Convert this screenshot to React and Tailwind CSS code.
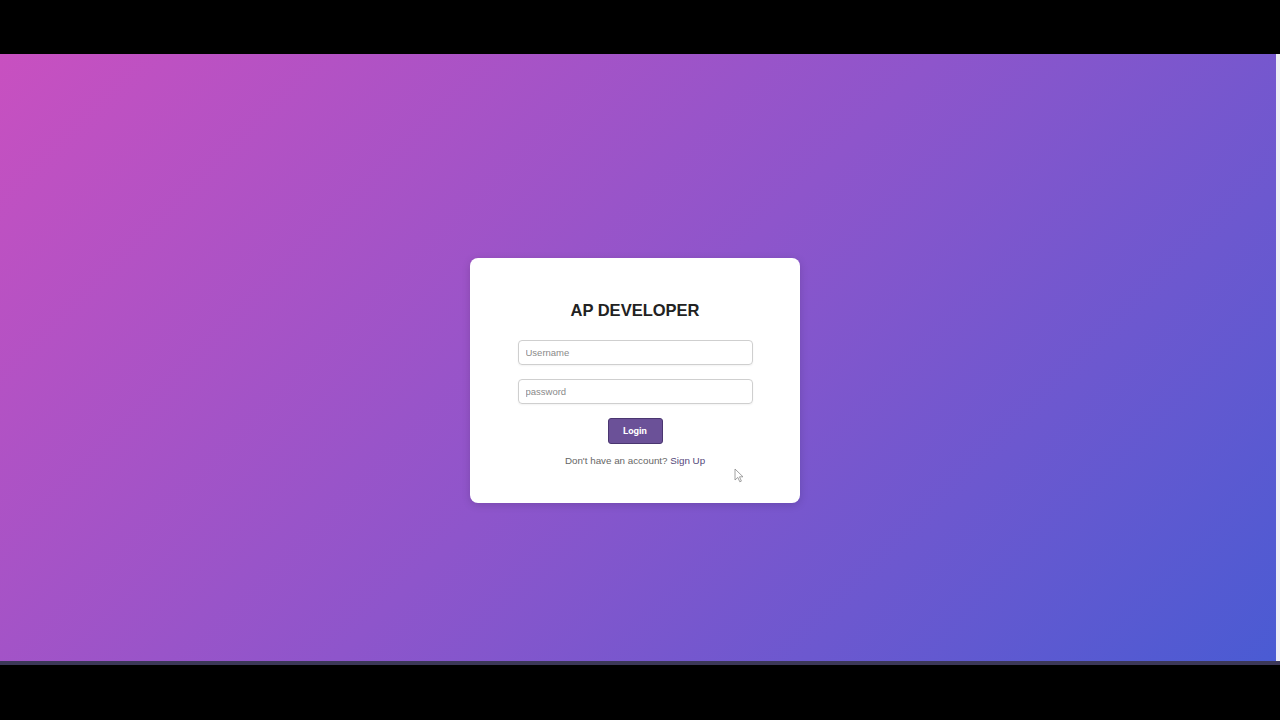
import React from "react";

function Cursor() {
  return (
    <svg width="10" height="15" viewBox="0 0 10 15" className="absolute left-[734px] top-[468px]">
      <path d="M1 1 L1 12 L3.8 9.4 L5.8 13.8 L7.4 13.1 L5.5 8.8 L9 8.8 Z" fill="#fff" stroke="#8a8a8a" strokeWidth="0.8" strokeLinejoin="round" />
    </svg>
  );
}

export default function App() {
  return (
    <div className="w-[1280px] h-[720px] bg-black flex flex-col relative font-['Liberation_Sans',Arial,sans-serif] overflow-hidden">
      <div className="h-[54px] shrink-0"></div>

      <div className="flex h-[607px] shrink-0">
        <div className="w-[1276px] h-full bg-[linear-gradient(135deg,#c850c0_0%,#8e55cb_50%,#4a5bd3_100%)] pl-[470px] pt-[204px]">
          <div className="w-[330px] h-[245px] bg-white rounded-[8px] shadow-[0_2px_8px_rgba(0,0,0,0.15)] flex flex-col items-center pt-[41px]">
            <h1 className="text-[16.5px] font-bold text-[#222] leading-[22px]">AP DEVELOPER</h1>

            <input
              type="text"
              placeholder="Username"
              className="mt-[19px] w-[235px] h-[25px] border border-[#cfcfcf] rounded-[4px] px-[7px] text-[9.5px] text-[#333] placeholder:text-[#8a8a8a] outline-none shadow-[0_1px_2px_rgba(0,0,0,0.05)]"
            />
            <input
              type="password"
              placeholder="password"
              className="mt-[14px] w-[235px] h-[25px] border border-[#cfcfcf] rounded-[4px] px-[7px] text-[9.5px] text-[#333] placeholder:text-[#8a8a8a] outline-none shadow-[0_1px_2px_rgba(0,0,0,0.05)]"
            />

            <button
              type="button"
              className="mt-[14px] w-[55px] h-[26px] bg-[#6b5198] border border-[#4a3670] rounded-[3px] text-white text-[9.5px] font-bold font-['Roboto',Arial,sans-serif]"
            >
              Login
            </button>

            <p className="mt-[11px] text-[9.8px] text-[#666] leading-[12px]">
              Don't have an account? <span className="text-[#55487a]">Sign Up</span>
            </p>
          </div>
        </div>
        <div className="w-[4px] h-full bg-[#eeeef4]"></div>
      </div>

      <div className="h-[4px] shrink-0 bg-[#3c3858]"></div>
      <div className="flex-1"></div>

      <Cursor />
    </div>
  );
}
